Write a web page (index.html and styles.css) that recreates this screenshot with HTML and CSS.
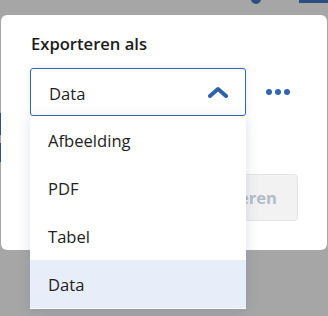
FILE: index.html
```html
<!DOCTYPE html>
<html>
<head>
  <meta charset="UTF-8">
  <title>Exporteren</title>
  <link rel="stylesheet" href="styles.css">
</head>
<body>
  <div class="backdrop">
    <span class="bg-dot"></span>
    <span class="bg-bar"></span>
    <span class="bg-side one"></span>
    <span class="bg-side two"></span>
  </div>

  <div class="modal">
    <h2 class="modal-title">Exporteren als</h2>
    <div class="export-row">
      <div class="select">
        <span>Data</span>
        <svg class="chevron" width="20" height="12" viewBox="0 0 20 12">
          <path d="M2 10 L10 3 L18 10" fill="none" stroke="#2f63a8" stroke-width="4" stroke-linecap="round" stroke-linejoin="round"/>
        </svg>
      </div>
      <button class="more">
        <svg width="26" height="8" viewBox="0 0 26 8">
          <circle cx="4" cy="4" r="3" fill="#3566ad"/>
          <circle cx="13" cy="4" r="3" fill="#3566ad"/>
          <circle cx="22" cy="4" r="3" fill="#3566ad"/>
        </svg>
      </button>
    </div>
    <div class="actions">
      <button class="export-btn" disabled>Exporteren</button>
    </div>
  </div>

  <ul class="options">
    <li>Afbeelding</li>
    <li>PDF</li>
    <li>Tabel</li>
    <li class="active">Data</li>
  </ul>
</body>
</html>
```

FILE: styles.css
```css
body {
  margin: 0;
  width: 328px;
  height: 316px;
  overflow: hidden;
  background-color: #a6a6a6;
  font-family: "Open Sans", "Noto Sans", sans-serif;
  color: #1f1f1f;
  position: relative;
}
.backdrop span {
  position: absolute;
  background-color: #2b4f80;
}
.bg-dot {
  left: 251px;
  top: -6px;
  width: 10px;
  height: 10px;
  border-radius: 50%;
}
.bg-bar {
  left: 299px;
  top: 0;
  width: 29px;
  height: 3px;
}
.bg-side {
  left: 0;
  width: 1px;
}
.bg-side.one { top: 113px; height: 22px; }
.bg-side.two { top: 143px; height: 19px; }

.modal {
  position: absolute;
  left: 1px;
  top: 15px;
  width: 326px;
  height: 235px;
  box-sizing: border-box;
  background: #fff;
  border-radius: 6px;
  padding: 18px 29px 0 29px;
}
.modal-title {
  margin: 0 0 13px 1px;
  font-size: 16.6px;
  line-height: 22px;
  font-weight: 600;
  color: #1c1c1c;
}
.export-row {
  display: flex;
  align-items: center;
}
.select {
  width: 216px;
  height: 48px;
  box-sizing: border-box;
  border: 1px solid #3566ad;
  border-radius: 3px;
  display: flex;
  align-items: center;
  justify-content: space-between;
  padding: 2px 17px 0 18px;
  font-size: 16.6px;
  box-shadow: 0 0 6px rgba(53, 102, 173, 0.15);
}
.chevron {
  margin-top: -2px;
}
.more {
  border: none;
  background: none;
  padding: 0;
  margin-left: 19px;
  height: 24px;
  display: flex;
  align-items: center;
}
.actions {
  display: flex;
  justify-content: flex-end;
  margin-top: 58px;
}
.export-btn {
  font-family: inherit;
  font-size: 16.6px;
  font-weight: 700;
  color: #b4bcc7;
  background: #f2f2f2;
  border: 1px solid #e4e4e4;
  border-radius: 4px;
  height: 47px;
  padding: 0 20px;
}

.options {
  position: absolute;
  left: 30px;
  top: 116px;
  width: 216px;
  margin: 0;
  padding: 0;
  list-style: none;
  background: #fff;
  border-bottom: 1px solid #fff;
  box-shadow: 0 2px 12px rgba(60, 90, 140, 0.18);
}
.options li {
  height: 48px;
  line-height: 50px;
  padding-left: 18px;
  font-size: 16.6px;
  color: #222;
}
.options li.active {
  background-color: #e8eef9;
}
```
